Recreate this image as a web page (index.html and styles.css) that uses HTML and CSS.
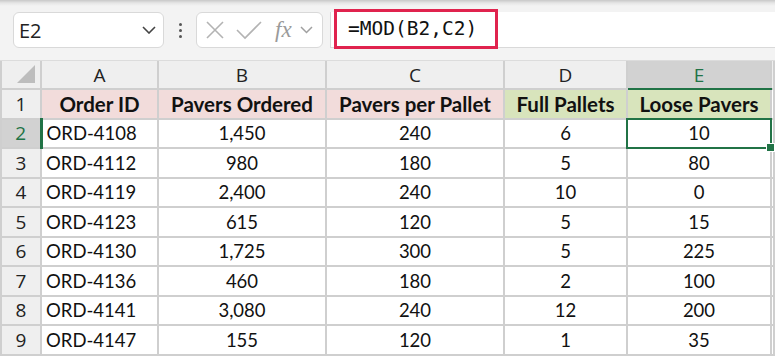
FILE: index.html
```html
<!DOCTYPE html>
<html lang="en">

<head>
    <title>MOD formula</title>
    <meta charset="utf-8">
    <link rel="stylesheet" href="styles.css">
</head>

<body>
    <div class="toolbar">
        <div class="namebox">
            <span>E2</span>
            <svg class="chev" width="14" height="8" viewBox="0 0 14 8"><path d="M1 1 L7 7 L13 1" fill="none" stroke="#444" stroke-width="1.6"/></svg>
        </div>
        <div class="dots"><i></i><i></i><i></i></div>
        <div class="fxbox">
            <svg width="20" height="20" viewBox="0 0 20 20"><path d="M2 2 L18 18 M18 2 L2 18" stroke="#b3b3b3" stroke-width="1.6"/></svg>
            <svg width="26" height="20" viewBox="0 0 26 20"><path d="M1 10 L9 18 L25 2" fill="none" stroke="#b3b3b3" stroke-width="1.6"/></svg>
            <span class="fx">fx</span>
            <svg width="13" height="8" viewBox="0 0 13 8"><path d="M1 1 L6.5 6.5 L12 1" fill="none" stroke="#a0a0a0" stroke-width="1.5"/></svg>
        </div>
        <div class="formula">
            <div class="highlight">=MOD(B2,C2)</div>
        </div>
    </div>

    <table class="sheet">
        <colgroup>
            <col style="width:40px">
            <col style="width:117px">
            <col style="width:168px">
            <col style="width:178px">
            <col style="width:123px">
            <col style="width:144px">
            <col>
        </colgroup>
        <tr class="colhead">
            <th class="corner"><div class="tri"></div></th>
            <th>A</th><th>B</th><th>C</th><th>D</th><th class="sel">E</th><th class="rest"></th>
        </tr>
        <tr class="titles">
            <th class="rowhead">1</th>
            <td class="pink">Order ID</td>
            <td class="pink">Pavers Ordered</td>
            <td class="pink">Pavers per Pallet</td>
            <td class="green">Full Pallets</td>
            <td class="green">Loose Pavers</td>
            <td class="rest"></td>
        </tr>
        <tr>
            <th class="rowhead sel">2</th>
            <td class="id">ORD-4108</td><td>1,450</td><td>240</td><td>6</td><td class="active">10<span class="handle"></span></td><td class="rest"></td>
        </tr>
        <tr>
            <th class="rowhead">3</th>
            <td class="id">ORD-4112</td><td>980</td><td>180</td><td>5</td><td>80</td><td class="rest"></td>
        </tr>
        <tr>
            <th class="rowhead">4</th>
            <td class="id">ORD-4119</td><td>2,400</td><td>240</td><td>10</td><td>0</td><td class="rest"></td>
        </tr>
        <tr>
            <th class="rowhead">5</th>
            <td class="id">ORD-4123</td><td>615</td><td>120</td><td>5</td><td>15</td><td class="rest"></td>
        </tr>
        <tr>
            <th class="rowhead">6</th>
            <td class="id">ORD-4130</td><td>1,725</td><td>300</td><td>5</td><td>225</td><td class="rest"></td>
        </tr>
        <tr>
            <th class="rowhead">7</th>
            <td class="id">ORD-4136</td><td>460</td><td>180</td><td>2</td><td>100</td><td class="rest"></td>
        </tr>
        <tr>
            <th class="rowhead">8</th>
            <td class="id">ORD-4141</td><td>3,080</td><td>240</td><td>12</td><td>200</td><td class="rest"></td>
        </tr>
        <tr>
            <th class="rowhead">9</th>
            <td class="id">ORD-4147</td><td>155</td><td>120</td><td>1</td><td>35</td><td class="rest"></td>
        </tr>
    </table>
</body>

</html>
```

FILE: styles.css
```css
html {
    background-color: #ffffff;
}

body {
    margin: 0;
    width: 775px;
    height: 357px;
    overflow: hidden;
    font-family: "Lato", "Open Sans", sans-serif;
    color: #111;
}

.toolbar {
    height: 61px;
    box-sizing: border-box;
    background: linear-gradient(#c8c8c8, #e6e6e6 3px, #f3f3f3 6px);
    border-bottom: 1px solid #dcdcdc;
    display: flex;
    align-items: center;
    padding-left: 13px;
}

.namebox {
    width: 151px;
    height: 36px;
    box-sizing: border-box;
    background: #fff;
    border: 1px solid #d9d9d9;
    border-radius: 6px;
    display: flex;
    align-items: center;
    justify-content: space-between;
    padding: 0 7px 0 5px;
    font-family: "Open Sans", sans-serif;
    font-size: 20px;
    color: #222;
}

.dots {
    width: 32px;
    display: flex;
    flex-direction: column;
    align-items: center;
    gap: 3px;
}

.dots i {
    width: 3px;
    height: 3px;
    border-radius: 50%;
    background: #555;
}

.fxbox {
    width: 127px;
    height: 36px;
    box-sizing: border-box;
    background: #fff;
    border: 1px solid #d9d9d9;
    border-radius: 6px;
    display: flex;
    align-items: center;
    padding-left: 8px;
    gap: 11px;
}

.fx {
    font-family: "Liberation Serif", serif;
    font-style: italic;
    font-size: 23px;
    color: #9a9a9a;
    margin-left: 2px;
    margin-right: -3px;
}

.formula {
    flex: 1;
    height: 36px;
    margin-left: 7px;
    background: #fff;
    border-left: 1px solid #d9d9d9;
    border-bottom: 1px solid #d9d9d9;
    box-sizing: border-box;
    display: flex;
    align-items: center;
    padding-left: 3px;
}

.highlight {
    width: 164px;
    height: 40px;
    box-sizing: border-box;
    border: 3px solid #e0234e;
    background: #fff;
    margin-top: -2px;
    font-family: "DejaVu Sans Mono", monospace;
    font-size: 19.5px;
    line-height: 34px;
    padding-left: 11px;
    color: #111;
}

.sheet {
    border-collapse: collapse;
    table-layout: fixed;
    width: 775px;
    font-size: 18.5px;
}

.sheet tr {
    height: 29.5px;
}

.sheet th,
.sheet td {
    border: 2px solid #cfcfcf;
    padding: 0;
    text-align: center;
    white-space: nowrap;
    overflow: visible;
}

.sheet .colhead {
    height: 28px;
}

.colhead th {
    background-color: #efefef;
    font-weight: normal;
    font-family: "Open Sans", sans-serif;
    font-size: 19px;
    color: #222;
    border-top: none;
}

.corner {
    position: relative;
}

.tri {
    position: absolute;
    right: 5px;
    bottom: 5px;
    width: 0;
    height: 0;
    border-left: 18px solid transparent;
    border-bottom: 18px solid #bdbdbd;
}

.colhead th.sel {
    background-color: #d2d2d2;
    color: #217346;
    border-bottom: 2px solid #217346;
}

.rowhead {
    background-color: #efefef;
    font-weight: normal;
    font-family: "Open Sans", sans-serif;
    font-size: 19px;
    color: #222;
    border-left: none;
}

.rowhead.sel {
    background-color: #d2d2d2;
    color: #217346;
    border-right: 3px solid #217346;
}

.titles td {
    font-weight: bold;
    font-size: 20.5px;
}

.pink {
    background-color: #f2dcdb;
}

.green {
    background-color: #d8e4bc;
}

.sheet td.id {
    text-align: left;
    padding-left: 4px;
}

.rest {
    border-right: none;
}

td.rest {
    background: #fff;
}

.active {
    position: relative;
    outline: 2px solid #217346;
    outline-offset: -1px;
}

.handle {
    position: absolute;
    right: -5px;
    bottom: -5px;
    width: 7px;
    height: 7px;
    background: #217346;
    border: 1px solid #fff;
}
```
